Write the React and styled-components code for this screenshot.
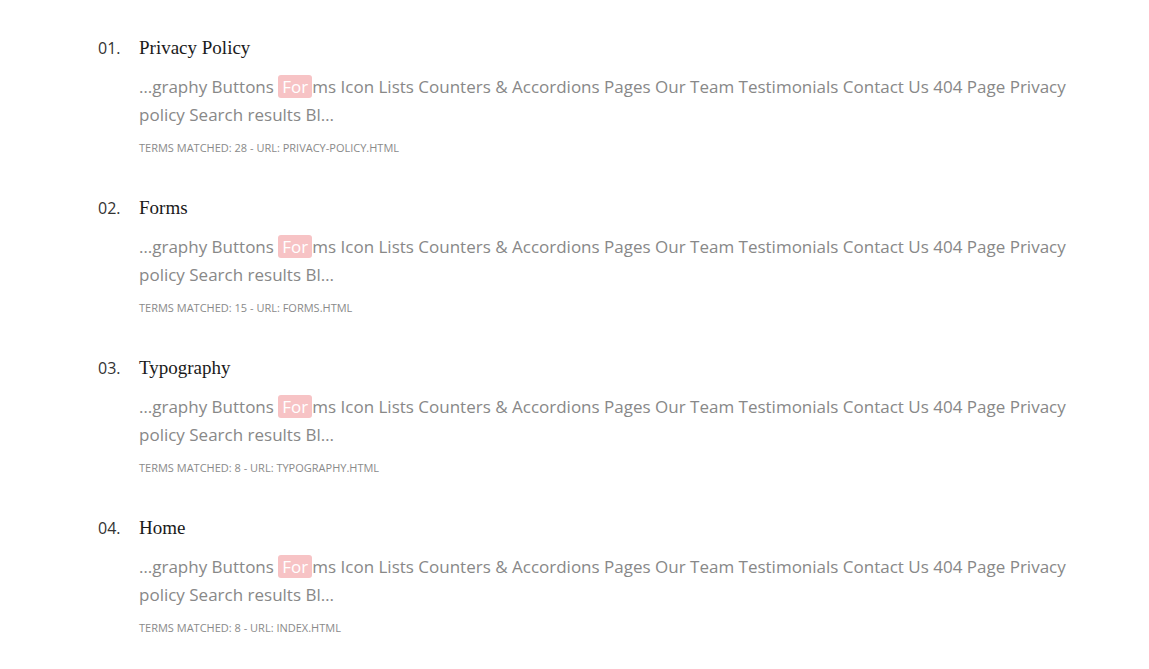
import React from "react";
import styled, { createGlobalStyle } from "styled-components";

const GlobalStyle = createGlobalStyle`
    body {
        margin: 0;
        background: #fff;
        font-family: "Open Sans", "Liberation Sans", sans-serif;
    }
`

const List = styled.ol`
    list-style: none;
    margin: 0;
    padding: 37px 0 0 98px;
    width: 990px;
`

const Item = styled.li`
    display: grid;
    grid-template-columns: 41px 1fr;
    margin-bottom: 42px;
`

const Num = styled.span`
    font-size: 16px;
    line-height: 22px;
    color: #333;
`

const Title = styled.h3`
    margin: 0 0 14px;
    font-family: "Liberation Serif", "DejaVu Serif", serif;
    font-weight: normal;
    font-size: 19px;
    line-height: 22px;
    color: #1a1a1a;
`

const Excerpt = styled.p`
    margin: 0 0 12px;
    font-size: 17px;
    line-height: 28px;
    color: #888;
`

const Mark = styled.span`
    background: #f7c3c5;
    color: #fff;
    padding: 0 4px;
    border-radius: 3px;
`

const Meta = styled.div`
    font-size: 11px;
    line-height: 14px;
    text-transform: uppercase;
    color: #8a8a8a;
`

const results = [
    { title: "Privacy Policy", terms: 28, url: "privacy-policy.html" },
    { title: "Forms", terms: 15, url: "forms.html" },
    { title: "Typography", terms: 8, url: "typography.html" },
    { title: "Home", terms: 8, url: "index.html" },
];

const App = () => {
    return (
        <>
            <GlobalStyle />
            <List>
                {results.map((r, i) => (
                    <Item key={r.url}>
                        <Num>{String(i + 1).padStart(2, "0")}.</Num>
                        <div>
                            <Title>{r.title}</Title>
                            <Excerpt>
                                …graphy Buttons <Mark>For</Mark>ms Icon Lists Counters &amp; Accordions Pages Our Team Testimonials Contact Us 404 Page Privacy policy Search results Bl…
                            </Excerpt>
                            <Meta>Terms matched: {r.terms} - URL: {r.url}</Meta>
                        </div>
                    </Item>
                ))}
            </List>
        </>
    )
}

export default App;
